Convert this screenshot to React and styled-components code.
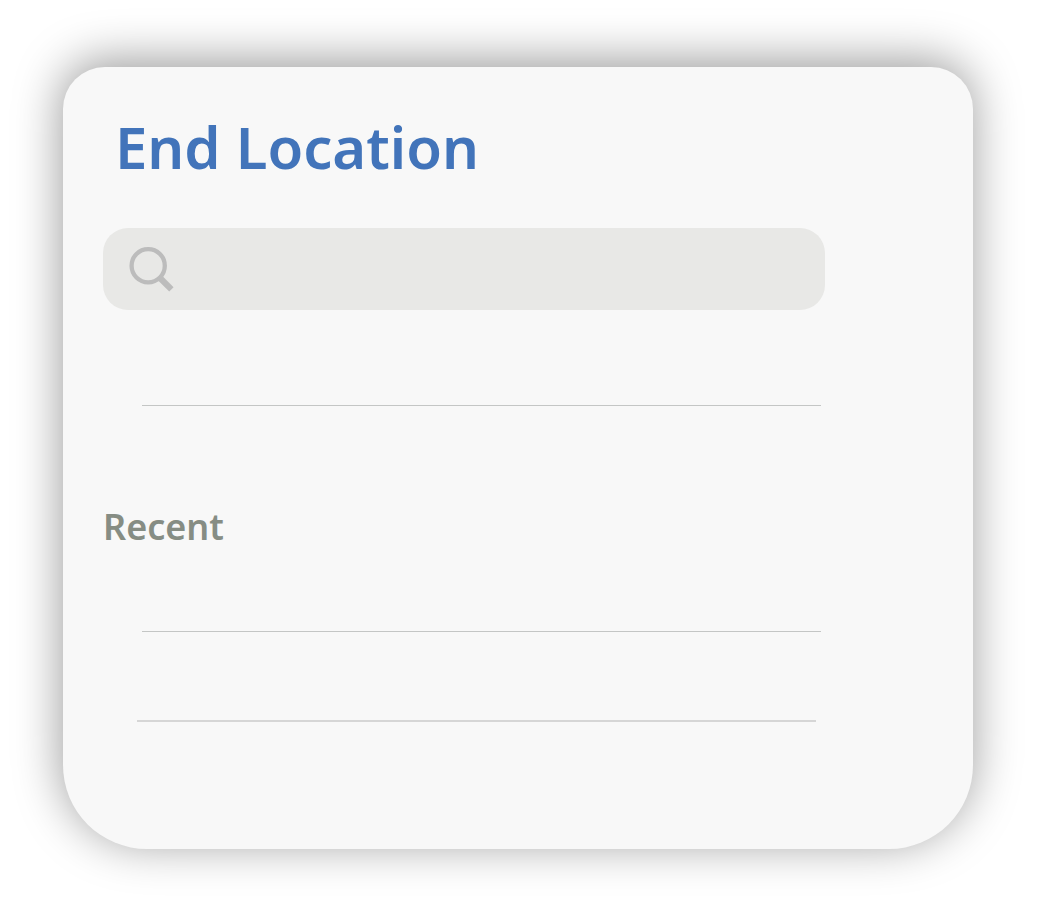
import React from "react";
import styled, { createGlobalStyle } from "styled-components";

const GlobalStyle = createGlobalStyle`
  *, *::before, *::after { box-sizing: border-box; }
  body {
    margin: 0;
    background: #ffffff;
    font-family: "Noto Sans", "Open Sans", sans-serif;
  }
`;

const Page = styled.div`
  padding: 67px 64px 58px 63px;
`;

const Card = styled.main`
  padding: 40px 148px 127px 40px;
  border-radius: 42px 42px 84px 84px;
  background: #f8f8f8;
  box-shadow: -1px -6px 48px rgba(0, 0, 0, 0.4);
`;

const Title = styled.h1`
  margin: 0;
  padding-left: 12px;
  font-size: 58px;
  font-weight: 600;
  line-height: 80px;
  color: #4274ba;
  white-space: nowrap;
`;

const SearchBox = styled.label`
  display: flex;
  align-items: center;
  gap: 16px;
  height: 82px;
  margin-top: 41px;
  padding: 0 26px;
  border-radius: 25px;
  background: #e8e8e6;
`;

const SearchIcon = styled.svg`
  flex: none;
  width: 46px;
  height: 46px;
`;

const SearchInput = styled.input`
  flex: 1;
  min-width: 0;
  height: 48px;
  padding: 0;
  border: 0;
  outline: 0;
  background: transparent;
  color: #868d84;
  font: inherit;
  font-size: 32px;
`;

const Entries = styled.ul`
  margin: 0;
  padding: 0;
  list-style: none;
`;

const Entry = styled.li`
  height: ${({ $tall }) => ($tall ? "96px" : "90px")};
  margin: ${({ $outset }) => ($outset ? "0 9px 0 34px" : "0 4px 0 39px")};
  border-bottom: ${({ $outset }) => ($outset ? "2px solid #d6d6d6" : "1px solid #c4c6c5")};
`;

const SectionTitle = styled.h2`
  margin: 106px 0 0;
  font-size: 36px;
  font-weight: 600;
  line-height: 30px;
  color: #868d84;
`;

export default function App() {
  return (
    <>
      <GlobalStyle />
      <Page>
        <Card>
          <Title>End Location</Title>
          <SearchBox>
            <SearchIcon viewBox="0 0 46 46" fill="none" stroke="#bcbcbc" aria-hidden="true">
              <circle cx="19.2" cy="19.7" r="16.6" strokeWidth="4.3" />
              <path d="M30 31 42.4 43.4" strokeWidth="6.2" />
            </SearchIcon>
            <SearchInput type="text" aria-label="Search end location" />
          </SearchBox>
          <Entries>
            <Entry $tall />
          </Entries>
          <SectionTitle>Recent</SectionTitle>
          <Entries>
            <Entry />
            <Entry $outset />
          </Entries>
        </Card>
      </Page>
    </>
  );
}
